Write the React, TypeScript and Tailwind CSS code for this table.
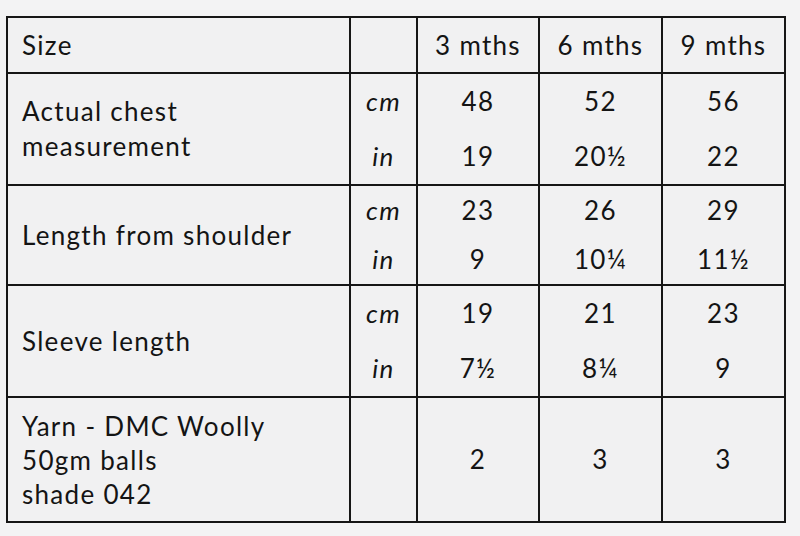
const font = { fontFamily: 'Lato, "Noto Sans", sans-serif' };

type Measure = {
  label: string[];
  cm: string[];
  inch: string[];
};

const measures: Measure[] = [
  { label: ['Actual chest', 'measurement'], cm: ['48', '52', '56'], inch: ['19', '20½', '22'] },
  { label: ['Length from shoulder'], cm: ['23', '26', '29'], inch: ['9', '10¼', '11½'] },
  { label: ['Sleeve length'], cm: ['19', '21', '23'], inch: ['7½', '8¼', '9'] },
];

function Cell({ children, className = '' }: { children?: React.ReactNode; className?: string }) {
  return <div className={`bg-[#f1f1f2] ${className}`}>{children}</div>;
}

export default function App() {
  return (
    <div className="w-[800px] h-[536px] bg-[#f3f3f4] pt-[16px] pl-[6px] text-[#141414]" style={font}>
      <div className="grid w-[780px] grid-cols-[341px_65px_120px_121px_121px] grid-rows-[54px_110px_98px_110px_123px] gap-[2px] bg-[#161616] p-[2px] text-[26px] tracking-[1.3px]">
        {/* header */}
        <Cell className="flex items-center pl-[14px]">Size</Cell>
        <Cell />
        {['3 mths', '6 mths', '9 mths'].map(s => (
          <Cell key={s} className="flex items-center justify-center">{s}</Cell>
        ))}

        {measures.map(m => (
          <div key={m.label[0]} className="contents">
            <Cell className="flex flex-col justify-center pl-[14px] leading-[35px]">
              {m.label.map(l => <span key={l}>{l}</span>)}
            </Cell>
            <Cell className="flex flex-col italic">
              <span className="flex flex-1 items-center justify-center">cm</span>
              <span className="flex flex-1 items-center justify-center">in</span>
            </Cell>
            {m.cm.map((v, j) => (
              <Cell key={j} className="flex flex-col">
                <span className="flex flex-1 items-center justify-center">{v}</span>
                <span className="flex flex-1 items-center justify-center">{m.inch[j]}</span>
              </Cell>
            ))}
          </div>
        ))}

        {/* yarn */}
        <Cell className="flex flex-col justify-center pl-[14px] leading-[34px]">
          <span>Yarn - DMC Woolly</span>
          <span>50gm balls</span>
          <span>shade 042</span>
        </Cell>
        <Cell />
        {['2', '3', '3'].map((v, j) => (
          <Cell key={j} className="flex items-center justify-center">{v}</Cell>
        ))}
      </div>
    </div>
  );
}
